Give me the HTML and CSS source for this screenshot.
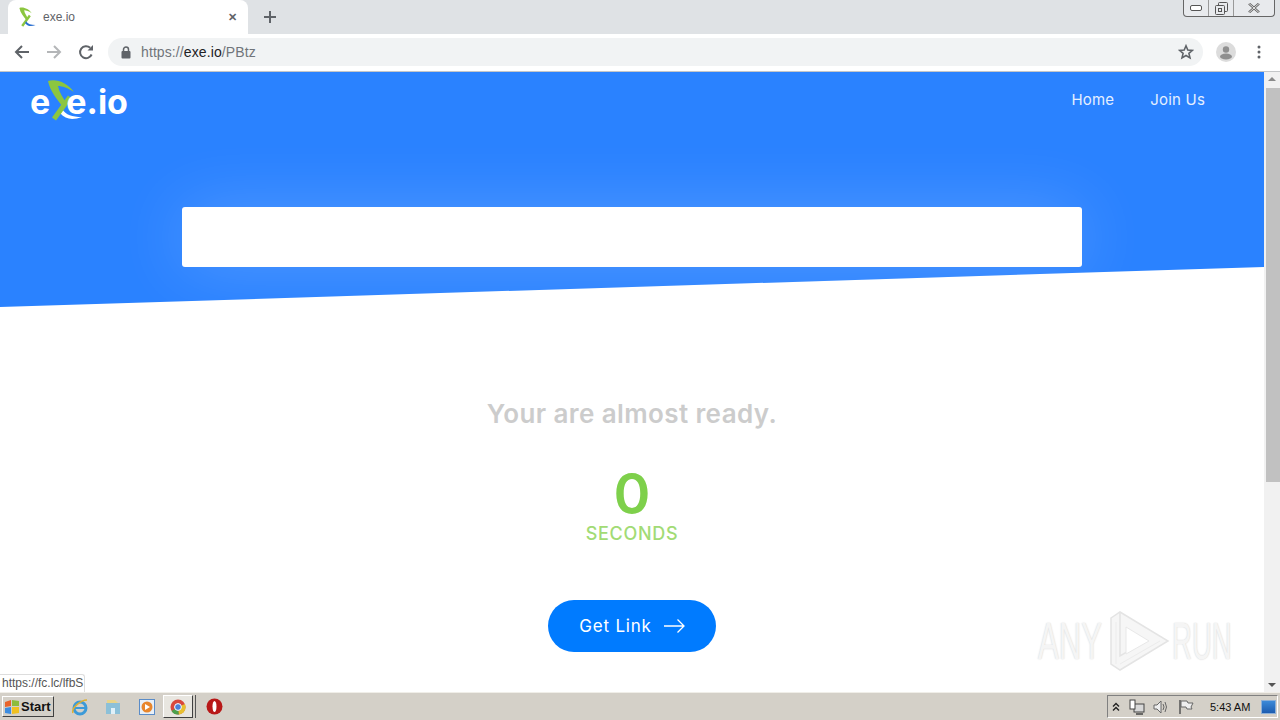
FILE: index.html
```html
<!DOCTYPE html>
<html lang="en">
  <head>
    <meta charset="UTF-8" />
    <title>exe.io</title>
    <link rel="stylesheet" href="styles.css">
  </head>
  <body>
    <div class="tabstrip">
      <div class="tab">
        <svg class="favicon" width="18" height="20" viewBox="0 0 36 42">
          <path d="M2 2C10 -1 22 4 28 13C22 9 16 7 12 7C13 13 17 19 21 25L16 27C11 20 4 12 2 2Z" fill="#8cc63f"/>
          <path d="M24 18L8 40" fill="none" stroke="#8cc63f" stroke-width="5"/>
          <path d="M16 30C20 36 26 38 36 38C27 41 20 41 14 34Z" fill="#2a6fd0"/>
        </svg>
        <span class="tab-title">exe.io</span>
        <span class="tab-close">&#10005;</span>
      </div>
      <svg class="new-tab" width="12" height="12" viewBox="0 0 12 12"><path d="M6 0V12M0 6H12" stroke="#5f6368" stroke-width="2"/></svg>
      <div class="win-controls">
        <span class="win-btn win-min"><svg width="12" height="6" viewBox="0 0 12 6"><rect x="0.5" y="0.5" width="11" height="5" rx="1.5" fill="#fff" stroke="#555"/></svg></span>
        <span class="win-btn win-max"><svg width="13" height="13" viewBox="0 0 13 13"><rect x="3.5" y="0.5" width="9" height="9" rx="1" fill="none" stroke="#555"/><rect x="0.5" y="3.5" width="9" height="9" rx="1" fill="#e8eaed" stroke="#555"/><rect x="3.5" y="6.5" width="3" height="3" fill="none" stroke="#555"/></svg></span>
        <span class="win-btn win-close"><svg width="12" height="10" viewBox="0 0 12 10"><path d="M1 0.5L11 9.5M11 0.5L1 9.5" stroke="#666" stroke-width="2.4"/><path d="M1 0.5L11 9.5M11 0.5L1 9.5" stroke="#fff" stroke-width="0.8"/></svg></span>
      </div>
    </div>

    <div class="toolbar">
      <svg class="tool-icon" width="16" height="16" viewBox="0 0 16 16"><path d="M15 8H2M8 2L2 8L8 14" fill="none" stroke="#5f6368" stroke-width="2"/></svg>
      <svg class="tool-icon" width="16" height="16" viewBox="0 0 16 16"><path d="M1 8H14M8 2L14 8L8 14" fill="none" stroke="#b4b6b8" stroke-width="2"/></svg>
      <svg class="tool-icon" width="16" height="16" viewBox="0 0 16 16"><path d="M13.6 10.5A6 6 0 1 1 12.2 3.8" fill="none" stroke="#5f6368" stroke-width="2"/><path d="M9.5 6.5H15V1Z" fill="#5f6368"/></svg>
      <div class="omnibox">
        <svg width="10" height="13" viewBox="0 0 10 13"><path d="M2.5 6V3.5a2.5 2.5 0 0 1 5 0V6" fill="none" stroke="#5f6368" stroke-width="1.5"/><rect x="0.5" y="5" width="9" height="7.5" rx="1" fill="#5f6368"/></svg>
        <span class="url"><span class="url-dim">https://</span>exe.io<span class="url-dim">/PBtz</span></span>
        <svg class="star" width="16" height="16" viewBox="0 0 16 16"><path d="M8 1.8L9.8 6L14.4 6.4L10.9 9.4L12 13.9L8 11.5L4 13.9L5.1 9.4L1.6 6.4L6.2 6Z" fill="none" stroke="#5f6368" stroke-width="1.6"/></svg>
      </div>
      <svg class="avatar" width="20" height="20" viewBox="0 0 20 20"><circle cx="10" cy="10" r="10" fill="#dcdcdc"/><circle cx="10" cy="7.5" r="3.2" fill="#8f8f8f"/><ellipse cx="10" cy="14.5" rx="6" ry="3" fill="#8f8f8f"/></svg>
      <svg class="dots" width="4" height="14" viewBox="0 0 4 14"><circle cx="2" cy="2" r="1.5" fill="#5f6368"/><circle cx="2" cy="7" r="1.5" fill="#5f6368"/><circle cx="2" cy="12" r="1.5" fill="#5f6368"/></svg>
    </div>

    <div class="viewport">
      <div class="page">
        <div class="hero">
          <div class="nav">
            <div class="logo">
              <span>e</span>
              <svg class="logo-x" width="36" height="42" viewBox="0 0 36 42">
                <path d="M16 30C20 36 26 38 36 38C27 41 20 41 14 34Z" fill="#fff"/>
                <path d="M2 2C10 -1 22 4 28 13C22 9 16 7 12 7C13 13 17 19 21 25L16 27C11 20 4 12 2 2Z" fill="#8cc63f"/>
                <path d="M24 18L8 40" fill="none" stroke="#8cc63f" stroke-width="5"/>
              </svg>
              <span>e.io</span>
            </div>
            <div class="nav-links">
              <a href="#">Home</a>
              <a href="#">Join Us</a>
            </div>
          </div>
          <div class="ad-card"></div>
        </div>

        <div class="timer">
          <h2 class="ready">Your are almost ready.</h2>
          <div class="count">0</div>
          <div class="seconds">SECONDS</div>
          <a class="get-link" href="#">Get Link
            <svg width="21" height="14" viewBox="0 0 21 14"><path d="M0 7H20M13.5 0.5L20 7L13.5 13.5" fill="none" stroke="#fff" stroke-width="1.3"/></svg>
          </a>
        </div>
      </div>

      <div class="scrollbar">
        <span class="arrow-up"></span>
        <div class="thumb"></div>
        <span class="arrow-down"></span>
      </div>

      <div class="status-bubble">https://fc.lc/lfbS</div>

      <div class="watermark">
        <span class="wm-any">ANY</span>
        <svg class="wm-play" width="62" height="62" viewBox="0 0 62 62">
          <path d="M3 8L12 2L60 31L12 60L3 54Z" fill="#f6f6f6" stroke="#e4e4e4" stroke-width="1.5"/>
          <path d="M12 2V46L38 31" fill="none" stroke="#e4e4e4" stroke-width="1.5"/>
          <path d="M18 17V44L41 31Z" fill="#fff" stroke="#e8e8e8"/>
          <path d="M8 12V54M52 31L12 54" fill="none" stroke="#ececec"/>
        </svg>
        <span class="wm-run">RUN</span>
      </div>
    </div>

    <div class="taskbar">
      <div class="start">
        <svg width="16" height="16" viewBox="0 0 16 16"><path d="M1 3L7 1V7L1 8Z" fill="#e8642c"/><path d="M8 1L15 2V7L8 7Z" fill="#8cbc3c"/><path d="M1 9L7 8V15L1 14Z" fill="#3c8ce0"/><path d="M8 8H15V14L8 15Z" fill="#f0c020"/></svg>
        <span>Start</span>
      </div>
      <div class="quick">
        <svg class="q-ie" width="18" height="18" viewBox="0 0 18 18"><circle cx="9" cy="10" r="6" fill="none" stroke="#3c9ad8" stroke-width="3"/><path d="M4 10H14" stroke="#3c9ad8" stroke-width="2"/><path d="M2 15C0 10 10 2 16 2" fill="none" stroke="#e0b030" stroke-width="1.5"/></svg>
        <svg class="q-folder" width="16" height="16" viewBox="0 0 16 16"><path d="M1 4H15V15H1Z" fill="#8cc0d8"/><path d="M2 1H10L13 4H2Z" fill="#e8d48c"/><rect x="6" y="9" width="4" height="6" fill="#e0f0f8"/></svg>
        <svg class="q-media" width="16" height="16" viewBox="0 0 16 16"><rect x="0.5" y="0.5" width="15" height="15" fill="#e8f0f8" stroke="#5a8cc8"/><circle cx="8" cy="8" r="5.5" fill="#e8862c"/><path d="M6 5L11 8L6 11Z" fill="#fff"/></svg>
        <div class="q-active">
          <svg width="16" height="16" viewBox="0 0 16 16"><circle cx="8" cy="8" r="7.5" fill="#d8483c"/><path d="M8 8L1.5 12A7.5 7.5 0 0 0 9 15.4Z" fill="#4ca04c"/><path d="M8 8L9 15.4A7.5 7.5 0 0 0 15 5Z" fill="#e8c030"/><circle cx="8" cy="8" r="3.4" fill="#4a80d8" stroke="#fff"/></svg>
        </div>
        <svg class="q-opera" width="17" height="17" viewBox="0 0 17 17"><circle cx="8.5" cy="8.5" r="8" fill="#b81818"/><ellipse cx="8.5" cy="8.5" rx="2" ry="5.5" fill="#fff"/></svg>
      </div>
      <div class="tray">
        <svg class="tray-up" width="8" height="10" viewBox="0 0 8 10"><path d="M1 4.5L4 1.5L7 4.5M1 8.5L4 5.5L7 8.5" fill="none" stroke="#222" stroke-width="1.4"/></svg>
        <svg class="tray-net" width="16" height="16" viewBox="0 0 16 16"><rect x="5" y="5" width="10" height="8" fill="#d8d8d8" stroke="#444"/><rect x="1" y="1" width="5" height="9" fill="#fff" stroke="#444"/><path d="M7 15H14" stroke="#444" stroke-width="1.5"/></svg>
        <svg class="tray-sound" width="16" height="16" viewBox="0 0 16 16"><path d="M1 6H4L8 2V14L4 10H1Z" fill="#eee" stroke="#666"/><path d="M10 5Q12 8 10 11M12 3Q15 8 12 13" fill="none" stroke="#666"/></svg>
        <svg class="tray-flag" width="16" height="16" viewBox="0 0 16 16"><path d="M2 1V15" stroke="#555" stroke-width="1.5"/><path d="M3 2H9L10 4H15L13 8L14 10H9L8 8H3Z" fill="#eee" stroke="#666"/></svg>
        <span class="clock">5:43 AM</span>
        <div class="show-desktop"></div>
      </div>
    </div>
  </body>
</html>
```

FILE: styles.css
```css
* {
  box-sizing: border-box;
}

html, body {
  height: 100%;
  margin: 0;
  overflow: hidden;
}

body {
  display: flex;
  flex-direction: column;
  font-family: "Liberation Sans", Arial, sans-serif;
  background: #fff;
}

a {
  text-decoration: none;
}

/* browser top */
.tabstrip {
  height: 34px;
  flex: none;
  display: flex;
  align-items: flex-end;
  background: #dfe2e5;
  position: relative;
}

.tab {
  width: 240px;
  height: 34px;
  margin-left: 8px;
  padding: 0 11px 0 10px;
  display: flex;
  align-items: center;
  background: #fff;
  border-radius: 8px 8px 0 0;
}

.favicon {
  margin-right: 7px;
}

.tab-title {
  flex: 1;
  font-size: 12px;
  color: #5f6368;
}

.tab-close {
  font-size: 11px;
  font-weight: bold;
  color: #5f6368;
}

.new-tab {
  margin: 0 0 11px 16px;
}

.win-controls {
  position: absolute;
  top: 0;
  right: 5px;
  width: 92px;
  height: 17px;
  display: flex;
  background: #e8eaed;
  border: 1px solid #666;
  border-top: none;
  border-radius: 0 0 4px 4px;
}

.win-btn {
  display: flex;
  align-items: center;
  justify-content: center;
}

.win-min {
  width: 25px;
  border-right: 1px solid #999;
}

.win-max {
  width: 25px;
  border-right: 1px solid #999;
}

.win-close {
  flex: 1;
}

.toolbar {
  height: 38px;
  flex: none;
  display: flex;
  align-items: center;
  padding: 0 19px 1px 14px;
  background: #fff;
  border-bottom: 1px solid #c4c6c8;
}

.tool-icon {
  margin-right: 16px;
}

.omnibox {
  width: 1095px;
  height: 28px;
  margin-left: -2px;
  padding: 0 9px 0 13px;
  display: flex;
  align-items: center;
  background: #f1f3f4;
  border-radius: 14px;
}

.url {
  flex: 1;
  margin-left: 10px;
  font-size: 14px;
  letter-spacing: 0.1px;
  color: #202124;
}

.url-dim {
  color: #70757a;
}

.avatar {
  margin-left: 13px;
}

.dots {
  margin-left: 21px;
}

/* page */
.viewport {
  flex: 1;
  min-height: 0;
  display: flex;
  position: relative;
}

.page {
  flex: 1;
  min-width: 0;
}

.hero {
  height: 235px;
  background: #2a82ff;
  clip-path: polygon(0 0, 100% 0, 100% 195px, 0 100%);
}

.nav {
  height: 135px;
  padding: 7px 59px 0 30px;
  display: flex;
  justify-content: space-between;
  align-items: flex-start;
}

.logo {
  display: flex;
  align-items: flex-end;
  height: 42px;
  font-family: Inter, sans-serif;
  font-size: 34px;
  font-weight: 700;
  line-height: 38px;
  color: #fff;
}

.logo-x {
  margin: 0 -16px 0 -4px;
}

.nav-links {
  display: flex;
  gap: 36px;
  padding-top: 11px;
}

.nav-links a {
  font-family: Inter, sans-serif;
  font-size: 15px;
  letter-spacing: 0.2px;
  color: #e4efff;
}

.ad-card {
  width: 900px;
  height: 60px;
  margin: 0 auto;
  background: #fff;
  border-radius: 3px;
  box-shadow: 0 0 70px rgba(255, 255, 255, 0.2);
}

.timer {
  display: flex;
  flex-direction: column;
  align-items: center;
  padding-top: 90px;
}

.ready {
  margin: 0;
  font-family: Inter, sans-serif;
  font-size: 26px;
  font-weight: 600;
  line-height: 34px;
  letter-spacing: 0.4px;
  color: #cccccc;
}

.count {
  margin-top: 36px;
  font-family: Inter, sans-serif;
  font-size: 56px;
  font-weight: 600;
  line-height: 54px;
  color: #7ed04b;
}

.seconds {
  font-family: Inter, sans-serif;
  font-size: 18px;
  font-weight: 500;
  line-height: 26px;
  letter-spacing: 0.7px;
  color: #a2db75;
}

.get-link {
  width: 168px;
  height: 52px;
  margin-top: 53px;
  display: flex;
  align-items: center;
  justify-content: center;
  gap: 12px;
  font-family: Inter, sans-serif;
  font-size: 17px;
  letter-spacing: 0.8px;
  color: #fff;
  background: #007bff;
  border-radius: 26px;
}

.scrollbar {
  width: 16px;
  flex: none;
  display: flex;
  flex-direction: column;
  align-items: center;
  background: #f1f1f1;
  padding: 5px 0 5px;
}

.arrow-up {
  border: 4px solid transparent;
  border-top: none;
  border-bottom: 4px solid #8a8a8a;
  margin-bottom: 7px;
}

.arrow-down {
  border: 4px solid transparent;
  border-bottom: none;
  border-top: 4px solid #555;
  margin-top: auto;
}

.thumb {
  width: 14px;
  height: 394px;
  margin-left: 1px;
  background: #c1c1c1;
}

.status-bubble {
  position: absolute;
  left: 0;
  bottom: 0;
  height: 18px;
  padding: 0 1px 0 2px;
  font-size: 12px;
  line-height: 17px;
  color: #555;
  background: #fff;
  border: 1px solid #ddd;
  border-left: none;
  border-bottom: none;
  border-top-right-radius: 3px;
}

.watermark {
  position: absolute;
  left: 1038px;
  top: 538px;
  display: flex;
  align-items: center;
  font-family: "Liberation Sans", Arial, sans-serif;
  font-size: 52px;
  color: #f5f5f5;
  text-shadow: 0 0 2px #cfcfcf;
}

.wm-any,
.wm-run {
  display: block;
  width: 64px;
  white-space: nowrap;
  transform-origin: left;
}

.wm-any {
  transform: scaleX(0.6);
}

.wm-run {
  width: 60px;
  transform: scaleX(0.53);
}

.wm-play {
  margin: 0 2px 0 6px;
}

/* windows taskbar */
.taskbar {
  height: 28px;
  flex: none;
  display: flex;
  align-items: center;
  background: #d4d0c8;
  border-top: 1px solid #f0eee8;
}

.start {
  width: 52px;
  height: 21px;
  margin-left: 2px;
  display: flex;
  align-items: center;
  gap: 1px;
  padding-left: 1px;
  font-size: 13px;
  font-weight: bold;
  color: #111;
  background: #d4d0c8;
  border: 1px solid;
  border-color: #fff #404040 #404040 #fff;
}

.quick {
  display: flex;
  align-items: center;
  margin-left: 17px;
}

.q-folder {
  margin-left: 16px;
}

.q-media {
  margin-left: 18px;
}

.q-active {
  width: 30px;
  height: 23px;
  margin-left: 8px;
  display: flex;
  align-items: center;
  justify-content: center;
  background: #e8e6e0;
  border: 1px solid;
  border-color: #fff #404040 #404040 #fff;
  box-shadow: 2px 0 0 #d4d0c8, 3px 0 0 #555;
}

.q-opera {
  margin-left: 13px;
}

.tray {
  margin-left: auto;
  margin-right: 2px;
  width: 171px;
  height: 23px;
  display: flex;
  align-items: center;
  padding-left: 4px;
  border: 1px solid;
  border-color: #808080 #fff #fff #808080;
}

.tray-net {
  margin-left: 9px;
}

.tray-sound {
  margin-left: 8px;
}

.tray-flag {
  margin-left: 9px;
}

.clock {
  margin-left: 16px;
  font-size: 11px;
  color: #111;
}

.show-desktop {
  width: 15px;
  height: 14px;
  margin-left: auto;
  margin-right: 1px;
  background: linear-gradient(#3c8ad8, #1c5cb0);
  border: 1px solid #8cb0d8;
}
```
